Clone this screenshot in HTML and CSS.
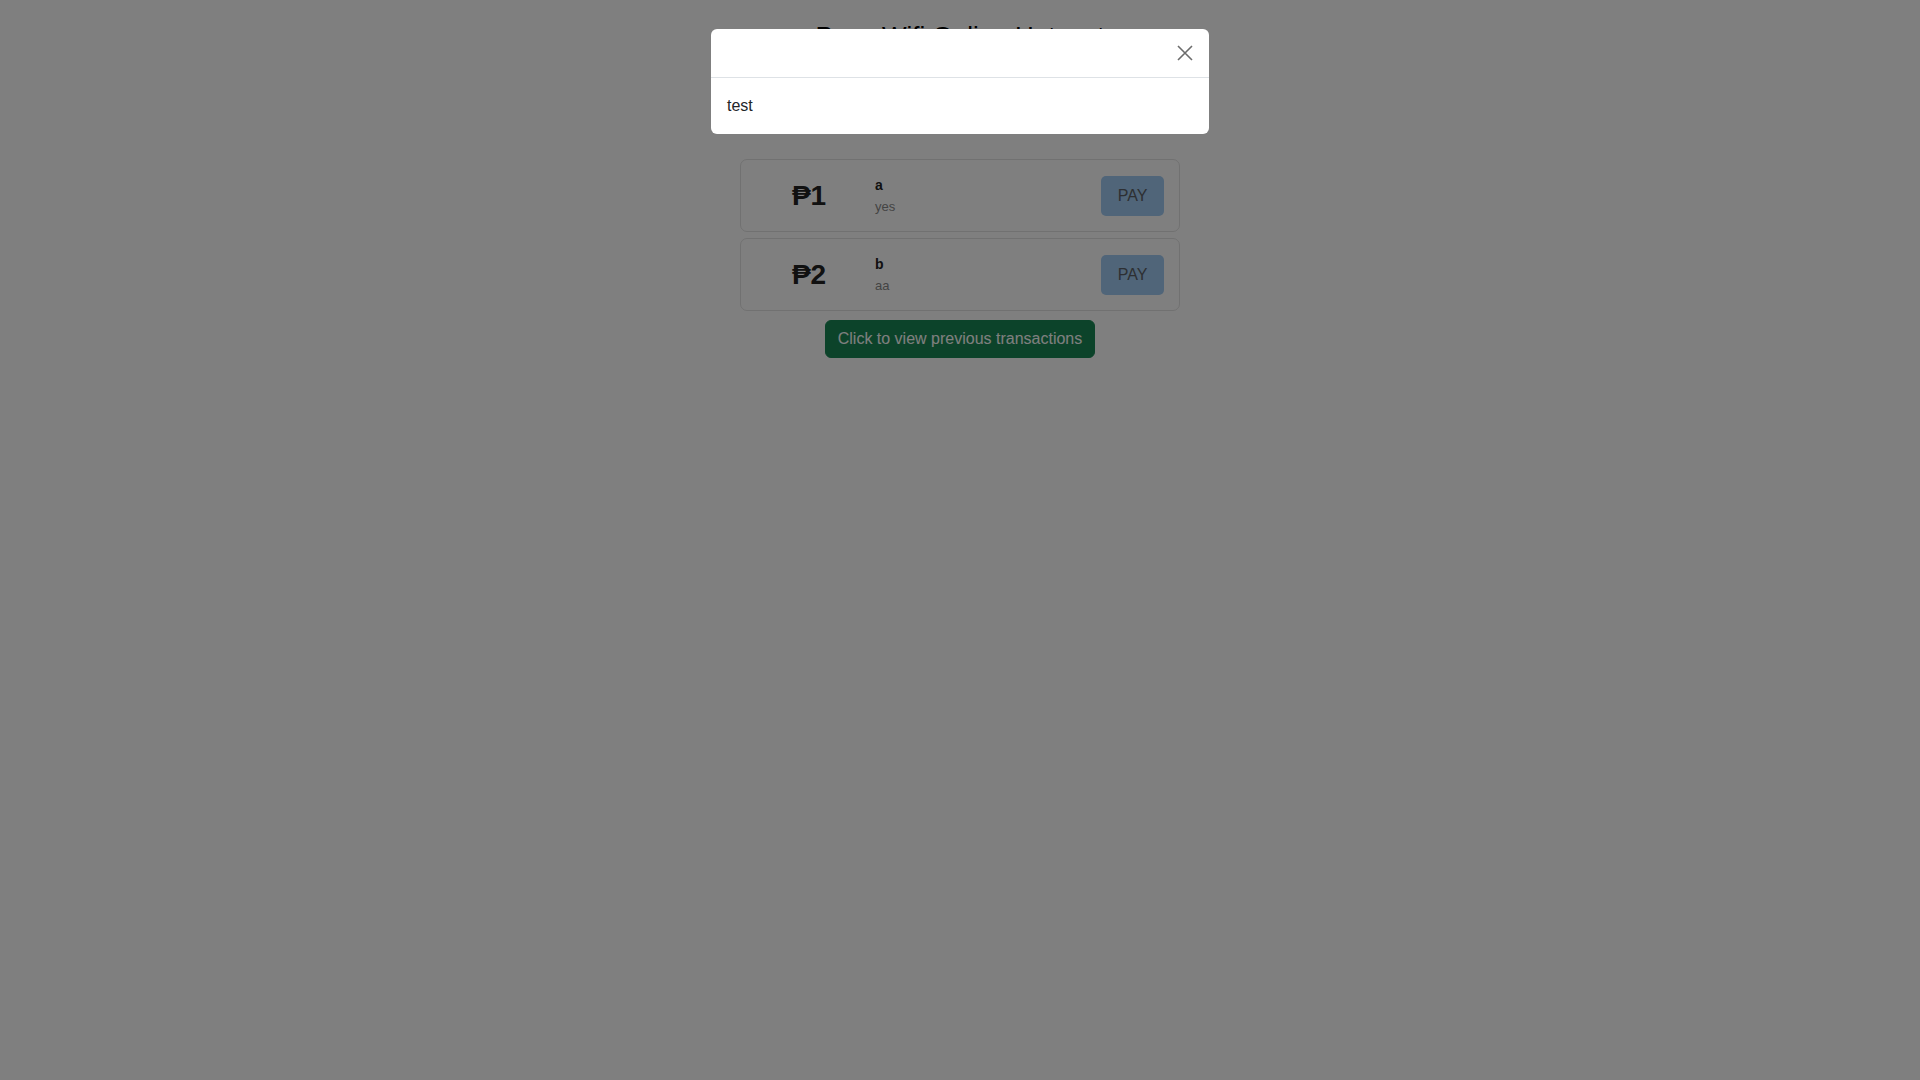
FILE: index.html
```html
<!DOCTYPE html>
<html lang="en">
<head>
<meta charset="utf-8">
<title>Peso Wifi Online Hotspot</title>
<link rel="stylesheet" href="styles.css">
</head>
<body>
<div class="page">
  <h1 class="title">Peso Wifi Online Hotspot</h1>
  <div class="rates">
    <div class="rate-card">
      <div class="price">₱1</div>
      <div class="info">
        <div class="name">a</div>
        <div class="desc">yes</div>
      </div>
      <button class="pay">PAY</button>
    </div>
    <div class="rate-card">
      <div class="price">₱2</div>
      <div class="info">
        <div class="name">b</div>
        <div class="desc">aa</div>
      </div>
      <button class="pay">PAY</button>
    </div>
    <button class="history">Click to view previous transactions</button>
  </div>
</div>

<div class="backdrop">
  <div class="modal">
    <div class="modal-header">
      <button class="close" aria-label="Close">
        <svg width="16" height="16" viewBox="0 0 16 16"><path d="M1 1 L15 15 M15 1 L1 15" stroke="#6c6c6c" stroke-width="1.6" fill="none"/></svg>
      </button>
    </div>
    <div class="modal-body">test</div>
  </div>
</div>
</body>
</html>
```
FILE: styles.css
```css
* { box-sizing: border-box; }
html, body {
  margin: 0;
  padding: 0;
  background: #ffffff;
  font-family: "Liberation Sans", Arial, "DejaVu Sans", sans-serif;
  color: #212529;
}
.page {
  display: flex;
  flex-direction: column;
  align-items: center;
  padding-top: 21px;
}
.title {
  margin: 0;
  font-size: 26px;
  font-weight: normal;
  line-height: 1.2;
  color: #000;
}
.rates {
  margin-top: 107px;
  width: 440px;
  display: flex;
  flex-direction: column;
  align-items: center;
  gap: 6px;
}
.rate-card {
  width: 100%;
  display: flex;
  align-items: center;
  padding: 16px 15px 15px 16px;
  border: 1px solid #e2e2e2;
  border-radius: 7px;
  background: #fff;
}
.price {
  width: 104px;
  text-align: center;
  font-size: 28px;
  font-weight: bold;
  color: #222;
  line-height: 1;
}
.info {
  margin: -2px 0 -2px 14px;
  flex: 1;
  line-height: 22px;
}
.name {
  font-size: 14px;
  font-weight: bold;
  color: #222;
}
.desc {
  font-size: 13px;
  color: #888;
}
.pay {
  width: 63px;
  height: 40px;
  border: none;
  border-radius: 5px;
  background: #a0caf2;
  color: #5a5f66;
  font-family: inherit;
  font-size: 16px;
  padding: 0;
}
.history {
  margin-top: 3px;
  border: 1px solid #198754;
  background: #198754;
  color: #fff;
  border-radius: 6px;
  padding: 6px 12px;
  font-family: inherit;
  font-size: 16px;
  line-height: 24px;
}
.backdrop {
  position: fixed;
  inset: 0;
  background: rgba(0, 0, 0, 0.5);
  display: flex;
  justify-content: center;
  align-items: flex-start;
}
.modal {
  margin-top: 29px;
  width: 498px;
  background: #fff;
  border-radius: 6px;
}
.modal-header {
  display: flex;
  justify-content: flex-end;
  padding: 16px;
  border-bottom: 1px solid #dee2e6;
}
.close {
  display: block;
  width: 16px;
  height: 16px;
  padding: 0;
  border: none;
  background: none;
}
.close svg { display: block; }
.modal-body {
  padding: 16px;
  font-size: 16px;
  line-height: 24px;
  color: #212529;
}
```
